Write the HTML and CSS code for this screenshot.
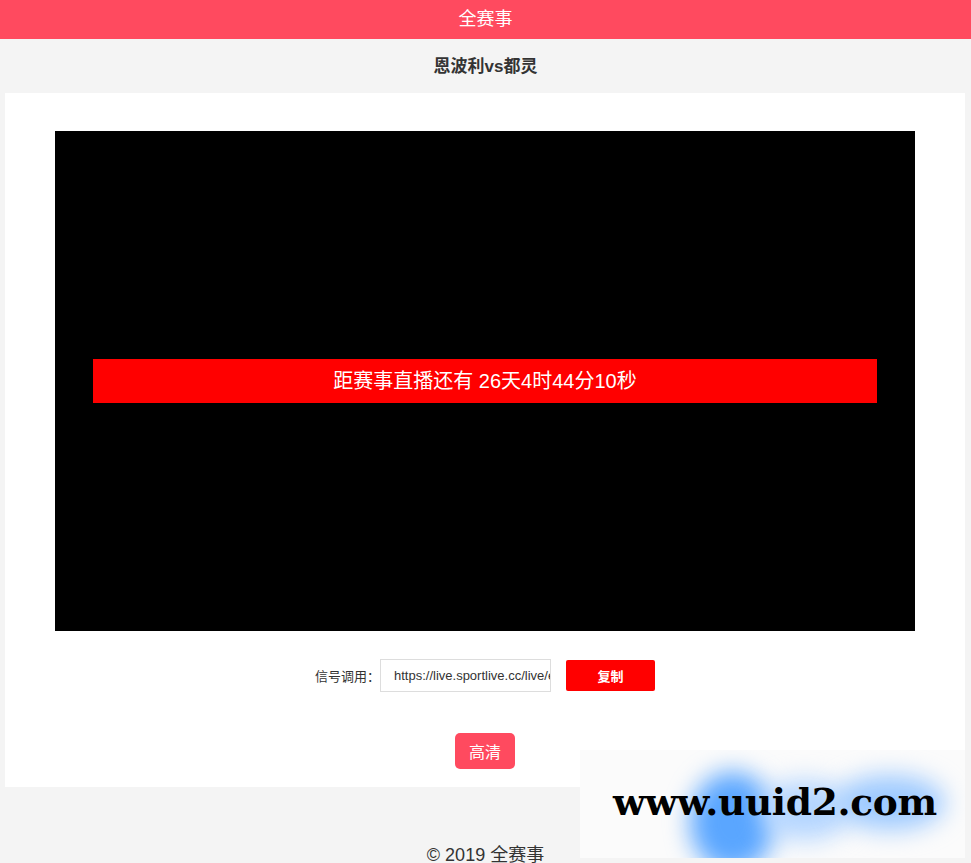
FILE: index.html
```html
<!DOCTYPE html>
<html lang="zh-CN">
<head>
<meta charset="utf-8">
<title>恩波利vs都灵 - 全赛事</title>
<link rel="stylesheet" href="styles.css">
</head>
<body>
<header class="topbar">全赛事</header>
<h2 class="match-title">恩波利vs都灵</h2>
<main class="card">
  <div class="player">
    <div class="countdown">距赛事直播还有 26天4时44分10秒</div>
  </div>
  <div class="signal">
    <span class="signal-label">信号调用：</span>
    <input class="signal-input" type="text" value="https://live.sportlive.cc/live/embed/12345" readonly>
    <button class="copy-btn">复制</button>
  </div>
  <div class="lines">
    <button class="line-btn">高清</button>
  </div>
</main>
<footer class="footer">© 2019 全赛事</footer>
<div class="watermark">
  <span class="blob blob-a"></span>
  <span class="blob blob-b"></span>
  <span class="blob blob-c"></span>
  <span class="wm-text">www.uuid2.com</span>
</div>
</body>
</html>
```

FILE: styles.css
```css
* { box-sizing: border-box; }
html, body { margin: 0; padding: 0; }
body {
  background: #f4f4f4;
  font-family: "Liberation Sans", "Noto Sans CJK SC", sans-serif;
  color: #333;
  height: 863px;
  overflow: hidden;
  position: relative;
}
.topbar {
  height: 39px;
  line-height: 39px;
  background: #ff4a5f;
  color: #fff;
  font-size: 18px;
  text-align: center;
}
.match-title {
  margin: 0;
  height: 54px;
  line-height: 56px;
  font-size: 17px;
  font-weight: bold;
  text-align: center;
  color: #333;
}
.card {
  margin: 0 6px 0 5px;
  background: #fff;
  padding: 38px 0 18px;
  height: 694px;
}
.player {
  margin: 0 50px;
  height: 500px;
  background: #000;
  display: flex;
  align-items: center;
  padding: 0 38px;
}
.countdown {
  flex: 1;
  height: 44px;
  line-height: 44px;
  background: #ff0000;
  color: #fff;
  font-size: 20px;
  text-align: center;
}
.signal {
  margin-top: 28px;
  display: flex;
  justify-content: center;
  align-items: center;
}
.signal-label {
  font-size: 13px;
  color: #333;
  margin-right: 0;
}
.signal-input {
  width: 171px;
  height: 33px;
  border: 1px solid #ddd;
  padding: 0 0 0 13px;
  font-family: "Liberation Sans", sans-serif;
  font-size: 13px;
  color: #333;
  outline: none;
  background: #fff;
}
.copy-btn {
  margin-left: 15px;
  width: 89px;
  height: 31px;
  border: none;
  border-radius: 2px;
  background: #ff0000;
  color: #fff;
  font-family: "Liberation Sans", "Noto Sans CJK SC", sans-serif;
  font-size: 13px;
  font-weight: bold;
}
.lines {
  margin-top: 41px;
  display: flex;
  justify-content: center;
}
.line-btn {
  width: 60px;
  height: 36px;
  border: none;
  border-radius: 5px;
  background: #ff4a5f;
  color: #fff;
  font-family: "Liberation Sans", "Noto Sans CJK SC", sans-serif;
  font-size: 16px;
}
.footer {
  padding-top: 56px;
  text-align: center;
  font-size: 18px;
  color: #333;
  line-height: 24px;
}
.watermark {
  position: absolute;
  left: 580px;
  top: 750px;
  width: 385px;
  height: 108px;
  background: #fbfbfb;
  overflow: hidden;
}
.blob {
  position: absolute;
  border-radius: 50%;
  filter: blur(12px);
}
.blob-a {
  left: 110px;
  top: 22px;
  width: 85px;
  height: 100px;
  background: #5aa6ff;
}
.blob-b {
  left: 180px;
  top: 30px;
  width: 90px;
  height: 60px;
  background: #b5d6ff;
}
.blob-c {
  left: 255px;
  top: 25px;
  width: 110px;
  height: 55px;
  background: #9ecaff;
}
.wm-text {
  position: absolute;
  left: 33px;
  top: 30px;
  font-family: "DejaVu Serif", "Liberation Serif", serif;
  font-weight: bold;
  font-size: 37.5px;
  color: #000;
  letter-spacing: -0.3px;
}
```
